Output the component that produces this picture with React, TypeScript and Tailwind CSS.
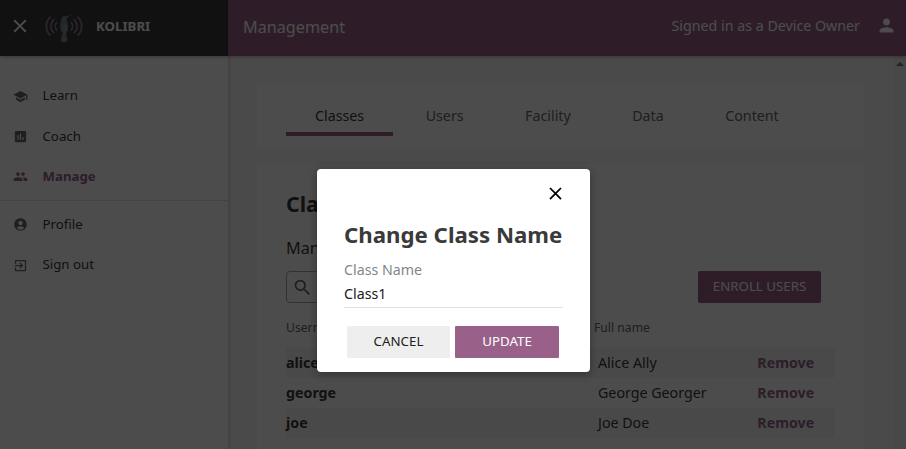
import type { ReactNode } from "react";
import {
  MdAccountCircle,
  MdAssessment,
  MdClose,
  MdExitToApp,
  MdPeople,
  MdPerson,
  MdSchool,
  MdSearch,
} from "react-icons/md";

function Logo() {
  return (
    <svg width="38" height="32" viewBox="0 0 38 32" fill="none">
      <g stroke="#8d8098" strokeWidth="1.7" strokeLinecap="round">
        <path d="M11.800 10.500a5.500 5.500 0 0 0 0 7.500" />
        <path d="M8.500 7.800a9 9 0 0 0 0 12.900" />
        <path d="M5 5.400a12.500 12.500 0 0 0 0 17.700" />
        <path d="M26.200 10.500a5.500 5.500 0 0 1 0 7.500" />
        <path d="M29.500 7.800a9 9 0 0 1 0 12.900" />
        <path d="M33 5.400a12.500 12.500 0 0 1 0 17.700" />
      </g>
      <path d="M28 1.400 21.800 4.400C19.500 3.100 16.800 4.200 16.500 7L15.200 12c-.6 4 .7 7.500 2.300 9.500h3.500c1.700-2.500 2.300-6 1.800-9L21.600 6.200z" fill="#6f8886" />
      <path d="M18 12c-.4 4 0 7 .6 9.500h2.300c1.700-3 2-6 1.500-8z" fill="#8f8c98" />
      <path d="M17.600 21.500h3.200l1.800 6.500-1.600 2.200h-3.800L15.600 28z" fill="#927d98" />
    </svg>
  );
}

function NavItem({ icon, label, active = false }: { icon: ReactNode; label: string; active?: boolean }) {
  return (
    <a
      className={`flex h-[40.4px] items-center gap-[15px] pl-[12.500px] text-[13.25px] ${
        active ? "font-bold text-[#996189]" : "text-[#3a3a3a]"
      }`}
    >
      <span className={active ? "text-[#996189]" : "text-[#686868]"}>{icon}</span>
      {label}
    </a>
  );
}

const tabs = ["Classes", "Users", "Facility", "Data", "Content"];
const members = [
  ["alice", "Alice Ally"],
  ["george", "George Georger"],
  ["joe", "Joe Doe"],
];

export default function App() {
  return (
    <div className="relative h-[449px] w-[906px] overflow-hidden bg-[#f9f9f9] font-['Noto_Sans',sans-serif] text-[14.24px] text-[#3a3a3a]">
      <div className="flex h-full">
        <aside className="z-10 flex w-[228px] shrink-0 flex-col bg-white shadow-[2px_0_2px_rgba(0,0,0,0.12)]">
          <div className="flex h-14 shrink-0 items-center bg-[#3a3a3a] pb-[4px] pl-[9px] text-white shadow-[0_1px_3px_rgba(0,0,0,0.3)]">
            <MdClose size={22} />
            <span className="ml-[14px] mt-[3px]">
              <Logo />
            </span>
            <span className="ml-[13px] mt-[2px] text-[13.25px] font-bold">KOLIBRI</span>
          </div>
          <nav className="pt-[20px]">
            <NavItem icon={<MdSchool size={15} />} label="Learn" />
            <NavItem icon={<MdAssessment size={15} />} label="Coach" />
            <NavItem icon={<MdPeople size={15} />} label="Manage" active />
            <div className="mb-[3.500px] mt-[3px] h-px bg-[#e0e0e0]" />
            <NavItem icon={<MdAccountCircle size={15} />} label="Profile" />
            <NavItem icon={<MdExitToApp size={15} />} label="Sign out" />
          </nav>
        </aside>
        <div className="flex min-w-0 flex-1 flex-col">
          <header className="z-10 flex h-14 shrink-0 items-center justify-between bg-[#996189] pb-[3px] pl-[15px] pr-[9px] text-white shadow-[0_1px_3px_rgba(0,0,0,0.3)]">
            <span className="pt-[2px] text-[16.2px]">Management</span>
            <span className="flex items-center gap-[16px] pb-[2px]">
              Signed in as a Device Owner
              <MdPerson size={21} />
            </span>
          </header>
          <div className="flex min-h-0 flex-1">
            <main className="flex-1 pl-[29px] pt-[28px]">
              <div className="flex h-[66px] w-[607px] gap-[3.500px] rounded-[2px] bg-white pl-[29px] pt-[12px]">
                {tabs.map((t, i) => (
                  <div
                    key={t}
                    className={`flex h-[40px] items-center justify-center border-b-4 px-[29px] pt-[4px] ${
                      i === 0 ? "border-[#996189]" : "border-transparent text-[#686868]"
                    }`}
                  >
                    {t}
                  </div>
                ))}
              </div>
              <section className="mt-[14px] h-[400px] w-[607px] rounded-[2px] bg-white px-[29px] pt-[24px]">
                <h1 className="text-[21.3px] font-bold leading-[32px]">Class1</h1>
                <p className="mt-[16px] text-[16.2px] leading-[24px]">Manage</p>
                <div className="mt-[11px] flex h-[32px] items-stretch justify-between pr-[14px]">
                  <div className="flex w-[280px] items-center rounded-[4px] border border-[#a8a8a8] pl-[4.500px] text-[#686868]">
                    <MdSearch size={21} />
                  </div>
                  <button className="w-[123px] rounded-[2px] bg-[#996189] text-[13.3px] text-white">ENROLL USERS</button>
                </div>
                <div className="mt-[14px] flex h-[21px] items-center pt-[1px] text-[12.2px] text-[#686868]">
                  <span className="w-[308px]">Username</span>
                  <span>Full name</span>
                </div>
                <div className="mt-[9.500px]">
                  {members.map(([user, name]) => (
                    <div key={user} className="flex h-[30px] items-center odd:bg-[#f5f5f5]">
                      <span className="w-[312px] font-bold">{user}</span>
                      <span className="w-[159.300px]">{name}</span>
                      <span className="font-bold text-[#996189]">Remove</span>
                    </div>
                  ))}
                </div>
              </section>
            </main>
            <div className="flex w-[13px] justify-center bg-[#f1f1f1] pt-[6px]">
              <div className="h-0 w-0 border-x-4 border-b-4 border-x-transparent border-b-[#777777]" />
            </div>
          </div>
        </div>
      </div>

      <div className="absolute inset-0 z-20 bg-black/70 pl-[317px] pt-[169px]">
        <div className="h-[202.500px] w-[272.500px] rounded-[4px] bg-white px-[27px] shadow-[0_2px_8px_rgba(0,0,0,0.33)]">
          <div className="flex justify-end pt-[14px] text-black">
            <MdClose size={21} className="-mr-[3px]" />
          </div>
          <h2 className="mt-[15px] whitespace-nowrap text-[22.24px] font-bold leading-[32px]">Change Class Name</h2>
          <label className="mt-[9px] block leading-[20px] text-[#868686]">Class Name</label>
          <div className="mt-[1px] flex h-[27px] items-center border-b border-[#e0e0e0] pb-[1px] text-[#212121]">Class1</div>
          <div className="mt-[18px] flex gap-[5px] pl-[3px] text-[13.3px]">
            <button className="h-[32px] w-[103px] rounded-[1px] bg-[#eeeeee] text-[#212121]">CANCEL</button>
            <button className="h-[32px] w-[104px] rounded-[1px] bg-[#996189] text-white">UPDATE</button>
          </div>
        </div>
      </div>
    </div>
  );
}
